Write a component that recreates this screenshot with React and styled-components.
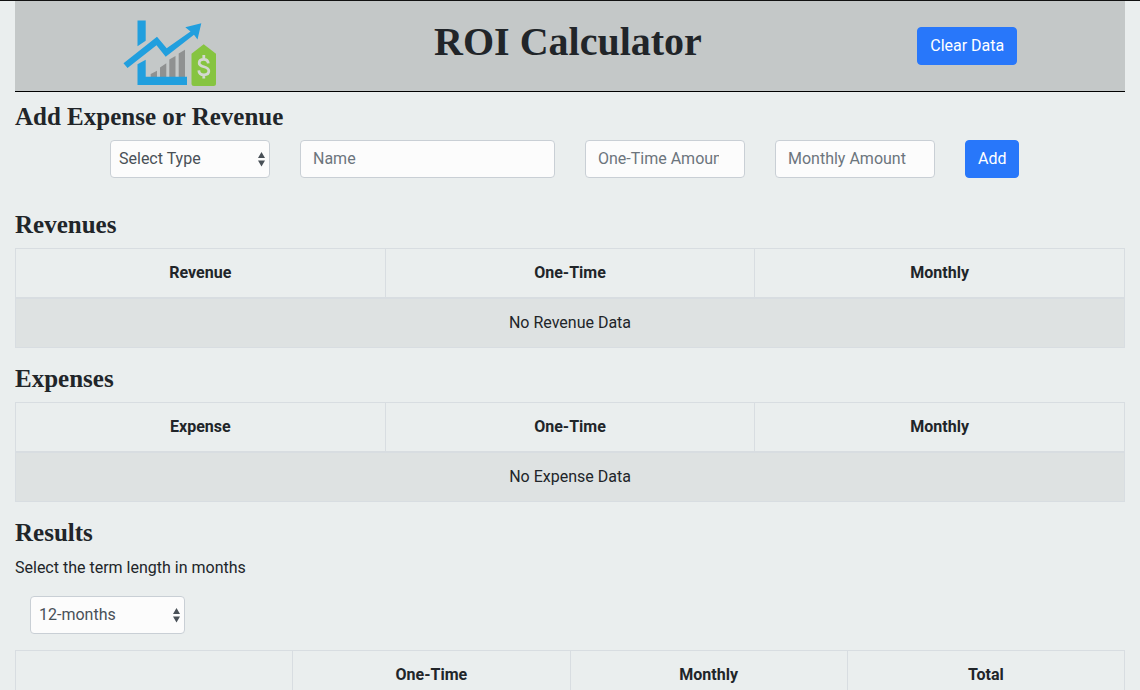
import React, { useState } from 'react';
import styled, { createGlobalStyle } from 'styled-components';

const GlobalStyle = createGlobalStyle`
  *, *::before, *::after { box-sizing: border-box; }
  html { scrollbar-width: none; }
  body {
    margin: 0;
    background: #eaeeee;
    color: #212529;
    font: 400 16px/24px Roboto, sans-serif;
  }
`;

const Page = styled.div`
  border-top: 1px solid #111;
  padding: 0 15px;
`;

const Header = styled.header`
  display: flex;
  justify-content: space-around;
  align-items: center;
  padding: 5px 0;
  background: #c4c8c8;
  border-bottom: 1px solid #000;
`;

const Logo = styled.svg`
  display: block;
  width: 96px;
  height: 80px;
`;

const Title = styled.h1`
  margin: 0 0 8px;
  font: 700 40px/48px 'Liberation Serif', serif;
`;

const Button = styled.button`
  justify-self: start;
  height: 38px;
  padding: 0 12px;
  border: 1px solid #2877fa;
  border-radius: 4px;
  background: #2877fa;
  color: #fff;
  font: 400 16px/24px Roboto, sans-serif;
  cursor: pointer;
`;

const Section = styled.section`
  margin-top: ${(p) => p.$gap}px;
`;

const Heading = styled.h2`
  margin: 0 0 8px;
  font: 700 25px/30px 'Liberation Serif', serif;
`;

const EntryForm = styled.form`
  display: grid;
  grid-template-columns: repeat(12, minmax(0, 1fr));
  column-gap: 30px;
`;

const Field = styled.div`
  position: relative;
  grid-column: ${(p) => p.$column};
`;

const Input = styled.input`
  display: block;
  width: 100%;
  height: 38px;
  padding: 5px 10px 7px 12px;
  border: 1px solid #c9cfd5;
  border-radius: 4px;
  background: #fcfcfc;
  color: #495057;
  font: 400 16px/24px Roboto, sans-serif;
  &::placeholder { color: #6c757d; opacity: 1; }
`;

const SelectBox = styled(Input).attrs({ as: 'select' })`
  appearance: none;
  padding: 6px 20px 6px 8px;
`;

const Arrows = styled.svg`
  position: absolute;
  top: 11px;
  right: 4px;
  width: 9px;
  height: 16px;
  pointer-events: none;
`;

const Term = styled.div`
  width: calc(100% / 6);
  padding: 0 15px;
  margin: 16px 0;
`;

const Text = styled.label`
  display: block;
`;

const Table = styled.table`
  width: 100%;
  table-layout: fixed;
  border-collapse: collapse;
  border: 1px solid #d8dde1;
  text-align: center;
`;

const HeadCell = styled.th`
  height: 49px;
  padding: 12px;
  border: 1px solid #d8dde1;
  border-bottom-width: 2px;
  font-weight: 700;
`;

const EmptyCell = styled.td`
  padding: 12px;
  border: 1px solid #d8dde1;
  background: #dee2e2;
`;

function Select({ children, ...props }) {
  return (
    <>
      <SelectBox {...props}>{children}</SelectBox>
      <Arrows viewBox="0 0 9 16" aria-hidden="true">
        <path d="M4.5 1L8 7H1z M4.5 15.5L8 9.5H1z" fill="#495057" />
      </Arrows>
    </>
  );
}

function DataTable({ columns, empty }) {
  return (
    <Table>
      <thead>
        <tr>
          {columns.map((name, i) => (
            <HeadCell key={i} scope="col">{name}</HeadCell>
          ))}
        </tr>
      </thead>
      {empty && (
        <tbody>
          <tr><EmptyCell colSpan={columns.length}>{empty}</EmptyCell></tr>
        </tbody>
      )}
    </Table>
  );
}

function RoiLogo() {
  return (
    <Logo viewBox="0 -5 96 80" role="img" aria-label="Growth chart with price tag">
      <path
        d="M27.7 66V63L34 59.7V66zM37 66V56.5L43.3 52.3V66zM46.3 66V48.6L52.5 45V66zM55.7 66V42.5L62 38.7V66z"
        fill="#8f9191"
      />
      <path
        d="M14.5 9.5H22.7V29.7L14.5 35.3zM14.5 53.3L22.7 48.7V65.7H64V74H14.5z"
        fill="#219fde"
      />
      <path
        d="M0.5 52.3L34 25.7L43.7 37.3L67.5 20.5L62.3 16.3L78.3 12.3L74.5 28.5L71 23.7L42.7 45.7L33.5 34.3L4.5 57z"
        fill="#219fde"
      />
      <path
        d="M80.7 33.3L93 42.7V72.5Q93 75 90.5 75H71Q68.5 75 68.5 72.5V42.7z"
        fill="#86c440"
      />
      <path
        d="M85.3 52.3C85 49.5 83.3 48.3 80.8 48.3C78 48.3 76.2 49.8 76.2 52C76.2 57 85.8 54.5 85.8 60C85.8 62.3 83.8 63.8 80.9 63.8C78 63.8 76 62.3 75.8 59.3M80.8 44V48.3M80.8 63.8V67.5"
        fill="none"
        stroke="#d3d8d0"
        strokeWidth="2.8"
      />
    </Logo>
  );
}

export default function App() {
  const [type, setType] = useState('');
  const [term, setTerm] = useState('12');
  return (
    <>
      <GlobalStyle />
      <Page>
        <Header>
          <RoiLogo />
          <Title>ROI Calculator</Title>
          <Button type="button">Clear Data</Button>
        </Header>
        <Section $gap={10}>
          <Heading>Add Expense or Revenue</Heading>
          <EntryForm onSubmit={(e) => e.preventDefault()}>
            <Field $column="2 / span 2">
              <Select aria-label="Type" value={type} onChange={(e) => setType(e.target.value)}>
                <option value="">Select Type</option>
                <option value="revenue">Revenue</option>
                <option value="expense">Expense</option>
              </Select>
            </Field>
            <Field $column="span 3">
              <Input type="text" placeholder="Name" aria-label="Name" />
            </Field>
            <Field $column="span 2">
              <Input type="number" placeholder="One-Time Amount" aria-label="One-Time Amount" />
            </Field>
            <Field $column="span 2">
              <Input type="number" placeholder="Monthly Amount" aria-label="Monthly Amount" />
            </Field>
            <Button type="submit">Add</Button>
          </EntryForm>
        </Section>
        <Section $gap={32}>
          <Heading>Revenues</Heading>
          <DataTable columns={['Revenue', 'One-Time', 'Monthly']} empty="No Revenue Data" />
        </Section>
        <Section $gap={16}>
          <Heading>Expenses</Heading>
          <DataTable columns={['Expense', 'One-Time', 'Monthly']} empty="No Expense Data" />
        </Section>
        <Section $gap={16}>
          <Heading>Results</Heading>
          <Text htmlFor="term">Select the term length in months</Text>
          <Term>
            <Field>
              <Select id="term" value={term} onChange={(e) => setTerm(e.target.value)}>
                <option value="12">12-months</option>
                <option value="24">24-months</option>
                <option value="36">36-months</option>
              </Select>
            </Field>
          </Term>
          <DataTable columns={['', 'One-Time', 'Monthly', 'Total']} />
        </Section>
      </Page>
    </>
  );
}
